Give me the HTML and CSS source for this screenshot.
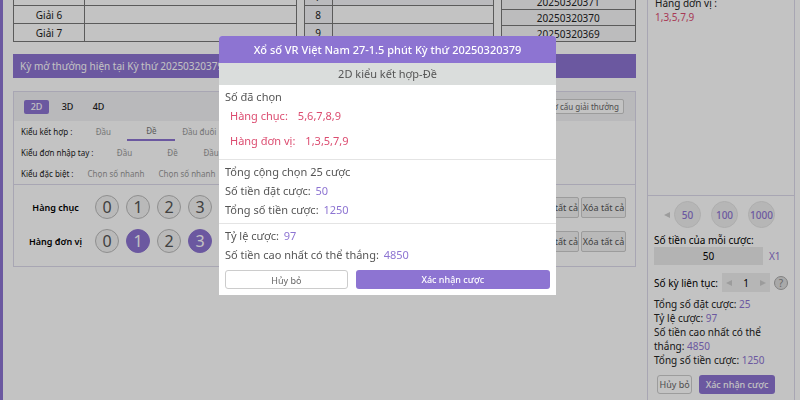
FILE: index.html
```html
<!DOCTYPE html>
<html lang="vi">
<head>
  <meta charset="UTF-8">
  <meta name="viewport" content="width=device-width, initial-scale=1.0">
  <title>Xổ số VR Việt Nam</title>
  <link rel="stylesheet" href="styles.css">
</head>
<body>

<div class="page">
  <main class="main">
    <!-- Draw results -->
    <div class="results">
      <table class="prizes">
        <tr><th></th><td></td></tr>
        <tr><th>Giải 6</th><td></td></tr>
        <tr><th>Giải 7</th><td></td></tr>
      </table>
      <table class="digits">
        <tr><th>7</th><td></td></tr>
        <tr><th>8</th><td></td></tr>
        <tr><th>9</th><td></td></tr>
      </table>
      <table class="history">
        <tr><td>20250320371</td></tr>
        <tr><td>20250320370</td></tr>
        <tr><td>20250320369</td></tr>
      </table>
    </div>

    <div class="period">Kỳ mở thưởng hiện tại Kỳ thứ 20250320379</div>

    <!-- Bet panel -->
    <section class="panel">
      <div class="tabs">
        <button class="tab active">2D</button>
        <button class="tab">3D</button>
        <button class="tab">4D</button>
        <button class="structure">Cơ cấu giải thưởng</button>
      </div>
      <div class="modes">
        <div class="mode-row">
          <span class="mode-label">Kiểu kết hợp :</span>
          <a href="#" class="mode">Đầu</a>
          <a href="#" class="mode active">Đề</a>
          <a href="#" class="mode">Đầu đuôi</a>
        </div>
        <div class="mode-row">
          <span class="mode-label">Kiểu đơn nhập tay :</span>
          <a href="#" class="mode">Đầu</a>
          <a href="#" class="mode">Đề</a>
          <a href="#" class="mode">Đầu đuôi</a>
        </div>
        <div class="mode-row">
          <span class="mode-label">Kiểu đặc biệt :</span>
          <a href="#" class="mode wide">Chọn số nhanh</a>
          <a href="#" class="mode wide">Chọn số nhanh</a>
        </div>
      </div>
      <div class="numbers">
        <div class="number-row">
          <span class="number-label">Hàng chục</span>
          <button class="ball">0</button>
          <button class="ball">1</button>
          <button class="ball">2</button>
          <button class="ball">3</button>
          <button class="ball">4</button>
          <button class="ball active">5</button>
          <button class="ball active">6</button>
          <button class="ball active">7</button>
          <button class="ball active">8</button>
          <button class="ball active">9</button>
          <div class="row-actions">
            <button class="pick">Chọn tất cả</button>
            <button class="pick">Xóa tất cả</button>
          </div>
        </div>
        <div class="number-row">
          <span class="number-label">Hàng đơn vị</span>
          <button class="ball">0</button>
          <button class="ball active">1</button>
          <button class="ball">2</button>
          <button class="ball active">3</button>
          <button class="ball">4</button>
          <button class="ball active">5</button>
          <button class="ball">6</button>
          <button class="ball active">7</button>
          <button class="ball">8</button>
          <button class="ball active">9</button>
          <div class="row-actions">
            <button class="pick">Chọn tất cả</button>
            <button class="pick">Xóa tất cả</button>
          </div>
        </div>
      </div>
    </section>
  </main>

  <!-- Bet slip -->
  <aside class="slip">
    <div class="slip-picked">
      <div>Hàng đơn vị :</div>
      <div class="red">1,3,5,7,9</div>
    </div>
    <div class="slip-form">
      <div class="chips">
        <svg class="arrow" viewBox="0 0 6 6"><path d="M6 0v6L0 3z"/></svg>
        <button class="chip">50</button>
        <button class="chip">100</button>
        <button class="chip">1000</button>
      </div>
      <label for="amount">Số tiền của mỗi cược:</label>
      <div class="amount-row">
        <input type="text" id="amount" value="50">
        <span class="purple">X1</span>
      </div>
      <div class="periods-row">
        <label for="periods">Số kỳ liên tục:</label>
        <div class="stepper">
          <button aria-label="Giảm"><svg class="arrow" viewBox="0 0 6 6"><path d="M6 0v6L0 3z"/></svg></button>
          <input type="text" id="periods" value="1">
          <button aria-label="Tăng"><svg class="arrow" viewBox="0 0 6 6"><path d="M0 0v6l6-3z"/></svg></button>
        </div>
        <button class="help">?</button>
      </div>
      <div class="summary">
        <div>Tổng số đặt cược: <span class="purple">25</span></div>
        <div>Tỷ lệ cược: <span class="purple">97</span></div>
        <div>Số tiền cao nhất có thể thắng: <span class="purple">4850</span></div>
        <div>Tổng số tiền cược: <span class="purple">1250</span></div>
      </div>
      <div class="slip-buttons">
        <button class="btn cancel">Hủy bỏ</button>
        <button class="btn confirm">Xác nhận cược</button>
      </div>
    </div>
  </aside>
</div>

<!-- Confirm dialog -->
<div class="overlay">
  <div class="modal" role="dialog" aria-labelledby="modalTitle">
    <div class="modal-title" id="modalTitle">Xổ số VR Việt Nam 27-1.5 phút Kỳ thứ 20250320379</div>
    <div class="modal-sub">2D kiểu kết hợp-Đề</div>
    <div class="modal-section">
      <div>Số đã chọn</div>
      <div class="picked"><span>Hàng chục:</span><span>5,6,7,8,9</span></div>
      <div class="picked"><span>Hàng đơn vị:</span><span>1,3,5,7,9</span></div>
    </div>
    <div class="modal-section">
      <div>Tổng cộng chọn 25 cược</div>
      <div>Số tiền đặt cược: <span class="purple">50</span></div>
      <div>Tổng số tiền cược: <span class="purple">1250</span></div>
    </div>
    <div class="modal-section">
      <div>Tỷ lệ cược: <span class="purple">97</span></div>
      <div>Số tiền cao nhất có thể thắng: <span class="purple">4850</span></div>
    </div>
    <div class="modal-buttons">
      <button class="btn cancel">Hủy bỏ</button>
      <button class="btn confirm">Xác nhận cược</button>
    </div>
  </div>
</div>

</body>
</html>
```
FILE: styles.css
```css
* {
  box-sizing: border-box;
}

body {
  margin: 0;
  font-family: "Noto Sans", "Open Sans", sans-serif;
  font-size: 10px;
  color: #222;
  background-color: #fff;
}

button,
input {
  margin: 0;
  padding: 0;
  border: none;
  background: none;
  font: inherit;
  color: inherit;
}

button {
  cursor: pointer;
  white-space: nowrap;
}

a {
  text-decoration: none;
  color: inherit;
}

.purple {
  color: #8d74d2;
}

.page {
  display: flex;
  gap: 11px;
  min-height: 100vh;
  padding-right: 5px;
  border-left: 3px solid #8d74d2;
}

.main {
  flex: 1;
  min-width: 0;
  padding-left: 10px;
}

/* Results tables, scrolled so only the last rows show */
.results {
  display: flex;
  align-items: flex-end;
  gap: 7px;
  height: 42px;
  overflow: hidden;
}

.results table {
  border-collapse: collapse;
  table-layout: fixed;
  font-size: 10px;
  line-height: 14px;
}

.results th,
.results td {
  height: 18px;
  padding: 0;
  border: 1px solid #777;
  font-weight: normal;
  text-align: center;
}

.prizes {
  flex: 284;
}

.prizes th {
  width: 71px;
}

.digits {
  flex: 190;
}

.digits th {
  width: 28px;
}

.digits tr:nth-child(odd) {
  background-color: #f4f4f8;
}

.digits th {
  background-color: #f4f4f8;
}

.history {
  flex: 135;
}

.results .history td {
  height: 16px;
  background-color: #f6f6f8;
}

.period {
  margin-top: 12px;
  padding-left: 7px;
  background-color: #8d74d2;
  color: #fff;
  font-size: 10px;
  line-height: 24px;
}

/* Bet panel */
.panel {
  margin-top: 13px;
  border: 1px solid #dcdaea;
}

.tabs {
  display: flex;
  align-items: center;
  gap: 6px;
  height: 29px;
  padding: 0 11px 0 10px;
  background-color: #f2f2f5;
}

.tab {
  width: 25px;
  height: 14px;
  border-radius: 2px;
  font-size: 9px;
  font-weight: 500;
  line-height: 14px;
}

.tab.active {
  background-color: #8d74d2;
  color: #fff;
}

.structure {
  margin-left: auto;
  padding: 0 4px;
  border: 1px solid #ccc;
  border-radius: 2px;
  background-color: #fff;
  color: #666;
  font-size: 8px;
  line-height: 13px;
}

.modes {
  padding: 0 7px;
  border-bottom: 1px solid #dcdaea;
  font-size: 8px;
}

.mode-row {
  display: flex;
  align-items: center;
  height: 21px;
}

.mode-label {
  white-space: nowrap;
}

.mode {
  width: 48px;
  color: #999;
  line-height: 17px;
  text-align: center;
  white-space: nowrap;
}

.mode-label + .mode {
  margin-left: 7px;
}

.mode.wide {
  width: 71px;
}

.mode.active {
  border-bottom: 2px solid #8d74d2;
  color: #777;
}

.numbers {
  padding: 5px 9px 8px;
}

.number-row {
  display: flex;
  align-items: center;
  gap: 7px;
  height: 34px;
}

.number-label {
  width: 65px;
  color: #000;
  font-size: 9px;
  font-weight: 600;
  text-align: center;
}

.ball {
  flex: none;
  width: 24px;
  height: 24px;
  border: 1px solid #bbb;
  border-radius: 50%;
  background-color: #f2f2f2;
  color: #555;
  font-size: 16px;
  line-height: 20px;
}

.ball.active {
  border-color: #8d74d2;
  background-color: #8d74d2;
  color: #fff;
}

.row-actions {
  display: flex;
  gap: 2px;
  margin-left: auto;
}

.pick {
  min-width: 45px;
  height: 21px;
  border: 1px solid #ccc;
  border-radius: 2px;
  background-color: #f2f2f2;
  color: #555;
  font-size: 9px;
}

/* Bet slip */
.slip {
  display: flex;
  flex-direction: column;
  width: 148px;
  border: solid #dcdaea;
  border-width: 0 1px;
}

.slip-picked {
  height: 196px;
  padding: 0 7px;
  border-bottom: 1px solid #dcdaea;
  overflow: hidden;
  line-height: 14px;
}

.slip-picked div:first-child {
  margin-top: -4px;
}

.red {
  color: #dc4c70;
}

.slip-form {
  padding: 5px 6px;
}

.chips {
  display: flex;
  align-items: center;
  gap: 10px;
  padding-left: 10px;
}

.arrow {
  flex: none;
  display: block;
  width: 6px;
  height: 6px;
  fill: #ccc;
}

.chips .arrow {
  margin-right: -6px;
}

.chip {
  flex: none;
  width: 27px;
  height: 27px;
  border: 1px solid #e4e4e4;
  border-radius: 50%;
  background-color: #eee;
  color: #8d74d2;
  font-weight: 500;
}

.slip-form label {
  display: block;
  color: #000;
  white-space: nowrap;
}

.chips + label {
  margin-top: 5px;
  line-height: 14px;
}

.amount-row {
  display: flex;
  align-items: center;
  gap: 6px;
}

.amount-row input {
  width: 109px;
  height: 18px;
  background-color: #eaeaea;
  color: #000;
  text-align: center;
}

.periods-row {
  display: flex;
  align-items: center;
  gap: 4px;
  height: 19px;
  margin-top: 8px;
}

.stepper {
  display: flex;
  align-items: center;
  flex: 1;
  padding: 0 4px;
  background-color: #eee;
}

.stepper input {
  width: 100%;
  min-width: 0;
  height: 19px;
  color: #000;
  text-align: center;
}

.help {
  flex: none;
  width: 14px;
  height: 14px;
  border: 1px solid #aaa;
  border-radius: 50%;
  background-color: #ddd;
  color: #888;
  font-size: 10px;
  line-height: 12px;
}

.summary {
  margin-top: 5px;
  line-height: 14px;
}

.slip-buttons {
  display: flex;
  gap: 7px;
  padding: 8px 13px 0 3px;
}

.btn {
  height: 19px;
  border-radius: 3px;
  font-size: 9px;
}

.cancel {
  flex: 34;
  border: 1px solid #ccc;
  background-color: #fff;
  color: #666;
}

.confirm {
  flex: 78;
  background-color: #8d74d2;
  color: #fff;
  font-weight: 500;
}

/* Dialog */
.overlay {
  position: fixed;
  inset: 0;
  display: flex;
  justify-content: center;
  align-items: flex-start;
  padding: 36px 25px 0 0;
  background-color: rgba(0, 0, 0, 0.235);
}

.modal {
  width: 337px;
  border-radius: 3px 3px 0 0;
  background-color: #fff;
  color: #555;
  font-size: 11px;
  line-height: 19px;
  overflow: hidden;
}

.modal-title {
  background-color: #8d74d2;
  color: #fff;
  font-weight: 500;
  line-height: 27px;
  text-align: center;
}

.modal-sub {
  background-color: #dadddc;
  line-height: 22px;
  text-align: center;
}

.modal-section {
  padding: 2px 6px 4px;
}

.modal-section + .modal-section {
  border-top: 1px solid #e4e4e4;
}

.modal-section .purple {
  margin-left: 2px;
}

.picked {
  display: flex;
  gap: 10px;
  padding-left: 5px;
  color: #dc4c70;
}

.picked + .picked {
  margin-top: 6px;
  padding-bottom: 5px;
}

.modal-buttons {
  display: flex;
  gap: 8px;
  padding: 2px 6px 6px;
}

.modal-buttons .cancel {
  flex: 121;
}

.modal-buttons .confirm {
  flex: 195;
}
```
